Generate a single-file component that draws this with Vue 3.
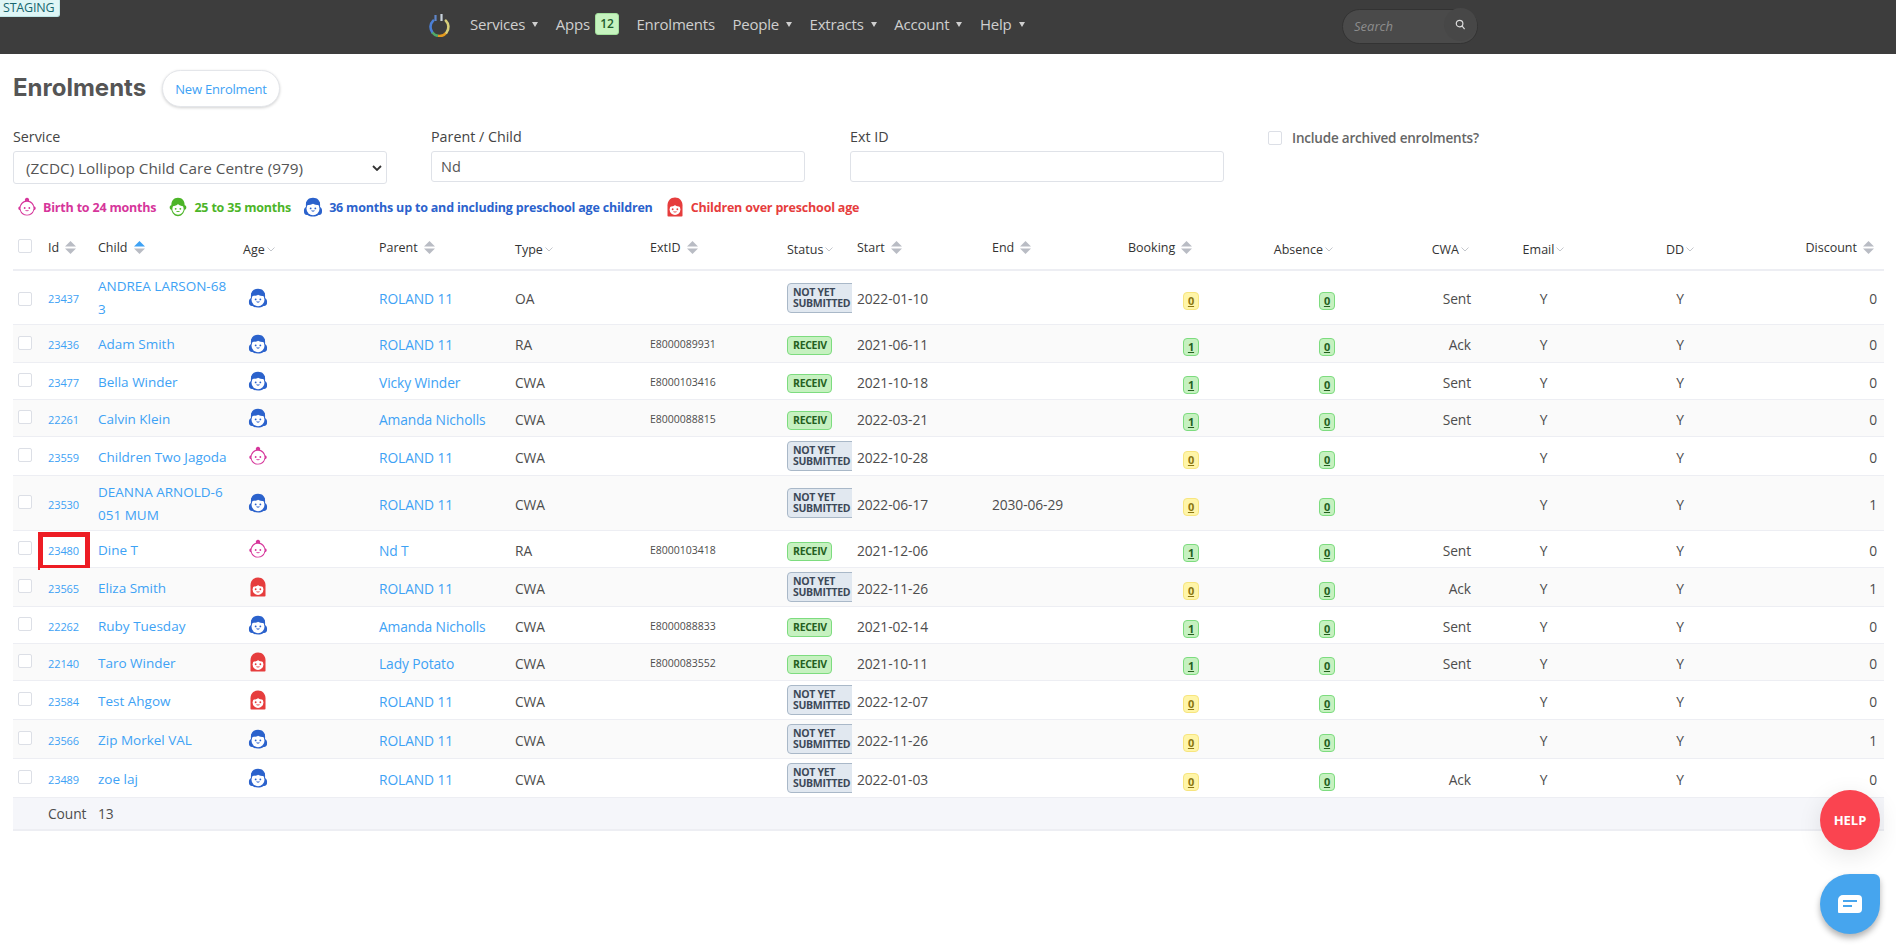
<script setup>
const faces = {
  pink: { c: '#d6369b', hair: 'M12 1a2.600 2.600 0 0 0-2.400 3.600A9 9 0 0 0 3.400 11 2.600 2.600 0 0 0 3.400 16 9 9 0 0 0 20.600 16 2.600 2.600 0 0 0 20.600 11 9 9 0 0 0 14.400 4.600 2.600 2.600 0 0 0 12 1z', cy: 13.500, r: 7.800 },
  green: { c: '#4cb528', hair: 'M12 1C6.500 1 4 5 4 10 2.600 10.200 2 11.400 2 12.600S2.800 15 4 15.200C5 19.500 8 23 12 23s7-3.500 8-7.800C21.200 15 22 13.800 22 12.600S21.400 10.200 20 10C20 5 17.500 1 12 1z', cy: 14.500, r: 6.800, fringe: 'M5 11c3.500 0 5.500-.8 7-2.500 1.500 1.700 3.500 2.500 7 2.500V7H5z' },
  blue: { c: '#2b62cc', hair: 'M12 1C6.500 1 3.500 4.500 3.500 9v3C1.800 13 .8 15 1.200 17.500 .9 20 2.800 22 5.500 21.500 7 23 9.500 23.500 12 23.500s5-.5 6.500-2C21.200 22 23.100 20 22.800 17.500 23.200 15 22.200 13 20.500 12V9C20.500 4.500 17.500 1 12 1z', cy: 14, r: 7.800, fringe: 'M4 9.500c4 0 6.500-.3 8-1.500 1.500 1.200 4 1.500 8 1.500V6H4z' },
  red: { c: '#e63d3d', hair: 'M12 .5C6.500.5 3 4.500 3 10v12.500a1 1 0 0 0 1 1h16a1 1 0 0 0 1-1V10C21 4.500 17.500.5 12 .5z', cy: 15, r: 6.500, fringe: 'M5 11.500c3.500 0 6-.5 7-2 1 1.500 3.500 2 7 2V8H5z' }
}
const legend = [
  { face: 'pink', text: 'Birth to 24 months' },
  { face: 'green', text: '25 to 35 months' },
  { face: 'blue', text: '36 months up to and including preschool age children' },
  { face: 'red', text: 'Children over preschool age' }
]
const navItems = [
  { label: 'Services', caret: true },
  { label: 'Apps', badge: '12' },
  { label: 'Enrolments' },
  { label: 'People', caret: true },
  { label: 'Extracts', caret: true },
  { label: 'Account', caret: true },
  { label: 'Help', caret: true }
]
const headers = [
  { label: 'Id', kind: 'sort' },
  { label: 'Child', kind: 'sort', active: true },
  { label: 'Age', kind: 'drop' },
  { label: 'Parent', kind: 'sort' },
  { label: 'Type', kind: 'drop' },
  { label: 'ExtID', kind: 'sort' },
  { label: 'Status', kind: 'drop' },
  { label: 'Start', kind: 'sort', cls: 'h-start' },
  { label: 'End', kind: 'sort' },
  { label: 'Booking', kind: 'sort', cls: 'h-booking' },
  { label: 'Absence', kind: 'drop', cls: 'h-right' },
  { label: 'CWA', kind: 'drop', cls: 'h-right' },
  { label: 'Email', kind: 'drop', cls: 'h-center' },
  { label: 'DD', kind: 'drop', cls: 'h-center' },
  { label: 'Discount', kind: 'sort', cls: 'h-right' }
]
const rows = [
  { id: '23437', child: 'ANDREA LARSON-683', face: 'blue', parent: 'ROLAND 11', type: 'OA', ext: '', rec: false, start: '2022-01-10', end: '', book: 0, cwa: 'Sent', disc: 0 },
  { id: '23436', child: 'Adam Smith', face: 'blue', parent: 'ROLAND 11', type: 'RA', ext: 'E8000089931', rec: true, start: '2021-06-11', end: '', book: 1, cwa: 'Ack', disc: 0 },
  { id: '23477', child: 'Bella Winder', face: 'blue', parent: 'Vicky Winder', type: 'CWA', ext: 'E8000103416', rec: true, start: '2021-10-18', end: '', book: 1, cwa: 'Sent', disc: 0 },
  { id: '22261', child: 'Calvin Klein', face: 'blue', parent: 'Amanda Nicholls', type: 'CWA', ext: 'E8000088815', rec: true, start: '2022-03-21', end: '', book: 1, cwa: 'Sent', disc: 0 },
  { id: '23559', child: 'Children Two Jagoda', face: 'pink', parent: 'ROLAND 11', type: 'CWA', ext: '', rec: false, start: '2022-10-28', end: '', book: 0, cwa: '', disc: 0 },
  { id: '23530', child: 'DEANNA ARNOLD-6051 MUM', face: 'blue', parent: 'ROLAND 11', type: 'CWA', ext: '', rec: false, start: '2022-06-17', end: '2030-06-29', book: 0, cwa: '', disc: 1 },
  { id: '23480', child: 'Dine T', face: 'pink', parent: 'Nd T', type: 'RA', ext: 'E8000103418', rec: true, start: '2021-12-06', end: '', book: 1, cwa: 'Sent', disc: 0, marked: true },
  { id: '23565', child: 'Eliza Smith', face: 'red', parent: 'ROLAND 11', type: 'CWA', ext: '', rec: false, start: '2022-11-26', end: '', book: 0, cwa: 'Ack', disc: 1 },
  { id: '22262', child: 'Ruby Tuesday', face: 'blue', parent: 'Amanda Nicholls', type: 'CWA', ext: 'E8000088833', rec: true, start: '2021-02-14', end: '', book: 1, cwa: 'Sent', disc: 0 },
  { id: '22140', child: 'Taro Winder', face: 'red', parent: 'Lady Potato', type: 'CWA', ext: 'E8000083552', rec: true, start: '2021-10-11', end: '', book: 1, cwa: 'Sent', disc: 0 },
  { id: '23584', child: 'Test Ahgow', face: 'red', parent: 'ROLAND 11', type: 'CWA', ext: '', rec: false, start: '2022-12-07', end: '', book: 0, cwa: '', disc: 0 },
  { id: '23566', child: 'Zip Morkel VAL', face: 'blue', parent: 'ROLAND 11', type: 'CWA', ext: '', rec: false, start: '2022-11-26', end: '', book: 0, cwa: '', disc: 1 },
  { id: '23489', child: 'zoe laj', face: 'blue', parent: 'ROLAND 11', type: 'CWA', ext: '', rec: false, start: '2022-01-03', end: '', book: 0, cwa: 'Ack', disc: 0 }
]
const colWidths = [27, 50, 145, 136, 136, 135, 137, 73, 132, 136, 87, 136, 136, 129, 144, 132]
</script>

<template>
  <div class="page">
    <span class="staging">STAGING</span>
    <nav class="nav">
      <svg class="logo" viewBox="0 0 21 24" width="21" height="24">
        <path d="M4.200 7.600A9 9 0 0 0 3.400 19.500" fill="none" stroke="#4b7fd6" stroke-width="2.600" stroke-linecap="round" />
        <path d="M3.400 19.500A9 9 0 0 0 9 22.900" fill="none" stroke="#4fa86a" stroke-width="2.600" />
        <path d="M9 22.900A9 9 0 0 0 17.500 19.500" fill="none" stroke="#e39a1f" stroke-width="2.600" />
        <path d="M17.500 19.500A9 9 0 0 0 16.800 7.600" fill="none" stroke="#d8cf7a" stroke-width="2.600" stroke-linecap="round" />
        <path d="M6.500 2v6" stroke="#5f86c9" stroke-width="2.200" />
        <path d="M12.500 1v7" stroke="#c9d3dc" stroke-width="2.200" />
      </svg>
      <div class="nav-links">
        <a v-for="item in navItems" :key="item.label" class="nav-link">
          <span>{{ item.label }}</span>
          <span v-if="item.badge" class="nav-badge">{{ item.badge }}</span>
          <span v-if="item.caret" class="caret"></span>
        </a>
      </div>
      <div class="search">
        <span class="search-text">Search</span>
        <span class="search-btn">
          <svg viewBox="0 0 12 12" width="11" height="11"><circle cx="5" cy="5" r="3.600" fill="none" stroke="#ddd" stroke-width="1.300" /><path d="M7.800 7.800 10.500 11" stroke="#ddd" stroke-width="1.300" /></svg>
        </span>
      </div>
    </nav>

    <main class="main">
      <div class="title-row">
        <h1 class="title">Enrolments</h1>
        <button class="new-btn">New Enrolment</button>
      </div>

      <div class="filters">
        <div class="field">
          <label class="field-label">Service</label>
          <div class="select">
            <span>(ZCDC) Lollipop Child Care Centre (979)</span>
            <svg viewBox="0 0 10 6" width="10" height="6"><path d="M1 1l4 4 4-4" fill="none" stroke="#333" stroke-width="1.800" /></svg>
          </div>
        </div>
        <div class="field">
          <label class="field-label">Parent / Child</label>
          <div class="input">Nd</div>
        </div>
        <div class="field">
          <label class="field-label">Ext ID</label>
          <div class="input"></div>
        </div>
        <div class="archive">
          <span class="check"></span>
          <span>Include archived enrolments?</span>
        </div>
      </div>

      <div class="legend">
        <div v-for="l in legend" :key="l.face" class="legend-item" :class="'c-' + l.face">
          <svg class="face" viewBox="0 0 24 24" width="20" height="20">
            <path :d="faces[l.face].hair" :fill="faces[l.face].c" />
            <circle cx="12" :cy="faces[l.face].cy" :r="faces[l.face].r" fill="#fff" />
            <path v-if="faces[l.face].fringe" :d="faces[l.face].fringe" :fill="faces[l.face].c" />
            <circle cx="9.200" :cy="faces[l.face].cy - 0.300" r="1.100" :fill="faces[l.face].c" />
            <circle cx="14.800" :cy="faces[l.face].cy - 0.300" r="1.100" :fill="faces[l.face].c" />
            <path :d="`M9.500 ${faces[l.face].cy + 2.300}a3 3 0 0 0 5 0z`" :fill="faces[l.face].c" />
          </svg>
          <span>{{ l.text }}</span>
        </div>
      </div>

      <table class="grid">
        <colgroup>
          <col v-for="(w, i) in colWidths" :key="i" :style="{ width: w + 'px' }" />
        </colgroup>
        <thead>
          <tr>
            <th class="cb-cell"><span class="check head-check"></span></th>
            <th v-for="h in headers" :key="h.label" :class="[h.cls, h.kind === 'drop' ? 'is-drop' : 'is-sort']">
              <span class="th-in">
                <span>{{ h.label }}</span>
                <svg v-if="h.kind === 'sort'" class="sort" viewBox="0 0 11 13" width="11" height="13">
                  <path d="M5.500 0 11 5.500H0z" :fill="h.active ? '#3ea2f5' : '#b9bcc4'" />
                  <path d="M5.500 13 0 7.500h11z" fill="#b9bcc4" />
                </svg>
                <svg v-else class="drop" viewBox="0 0 8 5" width="8" height="5"><path d="M.5.500 4 4 7.500.500" fill="none" stroke="#c4c7cc" stroke-width="1" /></svg>
              </span>
            </th>
          </tr>
        </thead>
        <tbody>
          <tr v-for="r in rows" :key="r.id">
            <td class="cb-cell"><span class="check"></span></td>
            <td class="id-cell" :class="{ marked: r.marked }"><a>{{ r.id }}</a></td>
            <td class="child-cell"><a>{{ r.child }}</a></td>
            <td class="age-cell">
              <svg class="face" viewBox="0 0 24 24" width="20" height="20">
                <path :d="faces[r.face].hair" :fill="faces[r.face].c" />
                <circle cx="12" :cy="faces[r.face].cy" :r="faces[r.face].r" fill="#fff" />
                <path v-if="faces[r.face].fringe" :d="faces[r.face].fringe" :fill="faces[r.face].c" />
                <circle cx="9.200" :cy="faces[r.face].cy - 0.300" r="1.100" :fill="faces[r.face].c" />
                <circle cx="14.800" :cy="faces[r.face].cy - 0.300" r="1.100" :fill="faces[r.face].c" />
                <path :d="`M9.500 ${faces[r.face].cy + 2.300}a3 3 0 0 0 5 0z`" :fill="faces[r.face].c" />
              </svg>
            </td>
            <td><a>{{ r.parent }}</a></td>
            <td>{{ r.type }}</td>
            <td class="ext-cell">{{ r.ext }}</td>
            <td class="status-cell">
              <div class="status-clip">
                <span v-if="r.rec" class="status ok">RECEIV</span>
                <span v-else class="status wait">NOT YET SUBMITTED</span>
              </div>
            </td>
            <td class="start-cell">{{ r.start }}</td>
            <td>{{ r.end }}</td>
            <td class="num-cell"><span class="pill" :class="r.book ? 'green' : 'yellow'">{{ r.book }}</span></td>
            <td class="num-cell"><span class="pill green">0</span></td>
            <td class="num-cell cwa-cell">{{ r.cwa }}</td>
            <td class="center-cell">Y</td>
            <td class="center-cell">Y</td>
            <td class="disc-cell">{{ r.disc }}</td>
          </tr>
        </tbody>
        <tfoot>
          <tr>
            <td></td>
            <td class="foot-label">Count</td>
            <td>13</td>
            <td colspan="13"></td>
          </tr>
        </tfoot>
      </table>
    </main>

    <button class="help-fab">HELP</button>
    <button class="chat-fab">
      <svg viewBox="0 0 24 18" width="24" height="18">
        <path d="M5 0h15a4 4 0 0 1 4 4v10a4 4 0 0 1-4 4H1a1 1 0 0 1-1-1V5a5 5 0 0 1 5-5z" fill="#fff" />
        <path d="M5 6h14M5 11h9" stroke="#46a5ee" stroke-width="2" />
      </svg>
    </button>
  </div>
</template>

<style>
html, body { background: #fff; }
</style>

<style scoped>
.page {
  position: relative;
  min-height: 949px;
  font-family: "Open Sans", "Noto Sans", "Liberation Sans", sans-serif;
  font-size: 14px;
  color: #555;
  overflow: hidden;
}
.staging {
  position: absolute;
  left: 0;
  top: 0;
  width: 60px;
  height: 17px;
  box-sizing: border-box;
  padding-left: 3px;
  background: #dff6f6;
  border: 1px solid #bfe6e6;
  border-top: 0;
  border-left: 0;
  border-radius: 0 0 3px 0;
  color: #17666e;
  font-size: 12.500px;
  line-height: 15px;
  letter-spacing: -0.200px;
}
.nav {
  height: 54px;
  background: #3d3d3d;
  display: flex;
  align-items: center;
  padding: 0 418px 0 429px;
}
.logo { flex: none; margin-top: -4px; }
.nav-links {
  display: flex;
  align-items: center;
  margin-left: 20px;
  gap: 17.500px;
  margin-top: -7px;
}
.nav-link {
  display: flex;
  align-items: center;
  color: #cfcfcf;
  font-size: 15px;
  letter-spacing: -0.200px;
  white-space: nowrap;
}
.caret {
  width: 0;
  height: 0;
  margin: 2px 0 0 7px;
  border-left: 3.500px solid transparent;
  border-right: 3.500px solid transparent;
  border-top: 5px solid #cfcfcf;
}
.nav-badge {
  width: 24px;
  height: 22px;
  margin-left: 5px;
  box-sizing: border-box;
  background: #c6f3bf;
  border: 1px solid #a2e09c;
  border-radius: 3px;
  color: #1d5c2b;
  font-size: 12px;
  font-weight: 600;
  line-height: 20px;
  text-align: center;
}
.search {
  flex: none;
  width: 136px;
  height: 35px;
  box-sizing: border-box;
  margin-left: auto;
  margin-top: -2px;
  display: flex;
  align-items: center;
  justify-content: space-between;
  background: #4a4a4a;
  border: 1px solid #333;
  border-radius: 18px;
  padding-left: 11px;
}
.search-text { color: #8d8d8d; font-style: italic; font-size: 13px; }
.search-btn {
  width: 33px;
  height: 33px;
  border-radius: 50%;
  background: #474747;
  display: flex;
  align-items: center;
  justify-content: center;
  margin-top: -3px;
}

.main { padding: 16px 12px 0 13px; }
.title-row { display: flex; align-items: center; height: 37px; gap: 15px; }
.title {
  margin: -3px 0 0;
  font-family: Inter, "Open Sans", sans-serif;
  font-size: 24px;
  font-weight: 700;
  color: #555;
  width: 134px;
  white-space: nowrap;
}
.new-btn {
  width: 118px;
  height: 37px;
  background: #fff;
  border: 1px solid #e4e6ea;
  border-radius: 19px;
  box-shadow: 0 1px 3px rgba(0, 0, 0, .18);
  color: #3ea2f5;
  font-family: inherit;
  font-size: 13px;
  padding: 0;
  letter-spacing: -0.200px;
}

.filters {
  display: grid;
  grid-template-columns: 418px 419px 418px 1fr;
  margin-top: 19px;
  height: 58px;
}
.field { display: flex; flex-direction: column; width: 374px; }
.field-label { font-size: 14.300px; line-height: 20px; height: 19px; padding-top: 1px; color: #444; margin-bottom: 5px; }
.select, .input {
  box-sizing: border-box;
  border: 1px solid #dfe2e8;
  border-radius: 3px;
  display: flex;
  align-items: center;
  background: #fff;
  color: #555;
  font-size: 14.500px;
}
.select { height: 33px; padding: 0 4px 0 12px; justify-content: space-between; font-size: 15.300px; }
.input { height: 31px; padding: 0 9px; }
.archive {
  display: flex;
  align-items: center;
  gap: 10px;
  height: 14px;
  margin-top: 5px;
  font-size: 13.500px;
  font-weight: 600;
  color: #666;
  letter-spacing: -0.200px;
}
.check {
  display: block;
  flex: none;
  width: 14px;
  height: 14px;
  box-sizing: border-box;
  border: 1px solid #dcdfe6;
  border-radius: 2px;
  background: #fff;
}

.legend {
  display: flex;
  align-items: center;
  margin-top: 13px;
  height: 20px;
  padding-left: 4px;
  gap: 12px;
  font-size: 12.500px;
  font-weight: 700;
  letter-spacing: -0.190px;
}
.legend-item { display: flex; align-items: center; gap: 6px; white-space: nowrap; }
.c-pink { color: #d6369b; }
.c-green { color: #4cb528; }
.c-blue { color: #2b62cc; }
.c-red { color: #e63d3d; }
.face { display: block; flex: none; }

.grid {
  table-layout: fixed;
  border-collapse: collapse;
  width: 1871px;
  margin-top: 8px;
}
.grid th {
  height: 45px;
  padding: 0 8px;
  text-align: left;
  font-weight: 400;
  font-size: 12.500px;
  color: #333;
  border-bottom: 2px solid #edeef3;
  box-sizing: border-box;
}
.th-in { display: inline-flex; align-items: center; gap: 6px; white-space: nowrap; }
.is-drop .th-in { gap: 2px; position: relative; top: 2px; }
.sort { display: block; }
.grid th.h-start { padding-left: 5px; }
.grid th.h-booking { text-align: right; padding-right: 16px; }
.grid th.h-right { text-align: right; padding-right: 10px; }
.grid th.h-center { text-align: center; }
.grid th.cb-cell, .grid td.cb-cell { padding: 0 0 2px 5px; }
.grid td {
  height: 37px;
  padding: 5px 8px 3px;
  box-sizing: border-box;
  border-bottom: 1px solid #edeef3;
  color: #4d4d4d;
  font-size: 13.800px;
  line-height: 23px;
  letter-spacing: -0.100px;
  vertical-align: middle;
}
.grid tbody tr:nth-child(even) td { background: #fafafa; }
.grid tbody tr:first-child td { padding-top: 4px; }
.grid tbody tr:nth-child(2) td, .grid tbody tr:last-child td { height: 38px; }
.grid a { color: #3ea2f5; }
.grid .id-cell { font-size: 11px; position: relative; }
.grid .child-cell { word-break: break-all; font-size: 13.500px; letter-spacing: 0; padding-right: 7px; }
.marked::after {
  content: "";
  position: absolute;
  left: -2px;
  top: 1px;
  width: 52px;
  height: 38px;
  box-sizing: border-box;
  border: 5px solid #ed1c24;
}
.grid .age-cell { padding: 4px 8px 4px 13px; }
.grid .ext-cell { font-size: 10.500px; letter-spacing: 0; }
.grid .status-cell { padding: 4px 0 4px 8px; }
.status-clip { width: 65px; overflow: hidden; }
.status {
  display: block;
  box-sizing: border-box;
  font-weight: 700;
  font-size: 10.500px;
  line-height: 11px;
  border: 1px solid;
  border-radius: 4px;
  letter-spacing: -0.300px;
}
.status.ok {
  width: 45px;
  height: 19px;
  margin-top: 4px;
  padding-left: 5px;
  line-height: 17px;
  overflow: hidden;
  background: #c6f1c0;
  border-color: #7ddc7f;
  color: #25601f;
}
.status.wait {
  width: 75px;
  height: 30px;
  padding: 3px 0 0 5px;
  background: #e1e8f0;
  border-color: #a9b8c8;
  color: #3c4858;
}
.grid .start-cell { padding-left: 5px; }
.num-cell { text-align: right; }
.pill {
  display: inline-block;
  width: 16px;
  height: 18px;
  box-sizing: border-box;
  border: 1px solid;
  border-radius: 4px;
  font-size: 11px;
  font-weight: 700;
  line-height: 16px;
  text-align: center;
  text-decoration: underline;
  vertical-align: middle;
  position: relative;
  top: 1px;
}
.pill.green { background: #c6f1c0; border-color: #7ddc7f; color: #25601f; }
.pill.yellow { background: #fff5a8; border-color: #f7e57f; color: #8b7612; }
.center-cell { text-align: center; }
.disc-cell { text-align: right; }
.grid .disc-cell { padding-right: 7px; }
.grid tfoot td {
  height: 32px;
  background: #f5f6fa;
  border-bottom: 2px solid #edeef3;
  padding: 0 8px;
}

.help-fab, .chat-fab {
  position: absolute;
  left: 1820px;
  width: 60px;
  height: 60px;
  border: 0;
  padding: 0;
  color: #fff;
  display: flex;
  align-items: center;
  justify-content: center;
}
.help-fab {
  top: 790px;
  border-radius: 50%;
  background: #fa4450;
  font-family: inherit;
  font-size: 13px;
  font-weight: 700;
  box-shadow: 0 6px 24px rgba(0, 0, 0, .1);
}
.chat-fab {
  top: 874px;
  border-radius: 50% 6px 50% 50%;
  background: #46a5ee;
  box-shadow: 0 4px 6px rgba(0, 0, 0, .3);
}
</style>
